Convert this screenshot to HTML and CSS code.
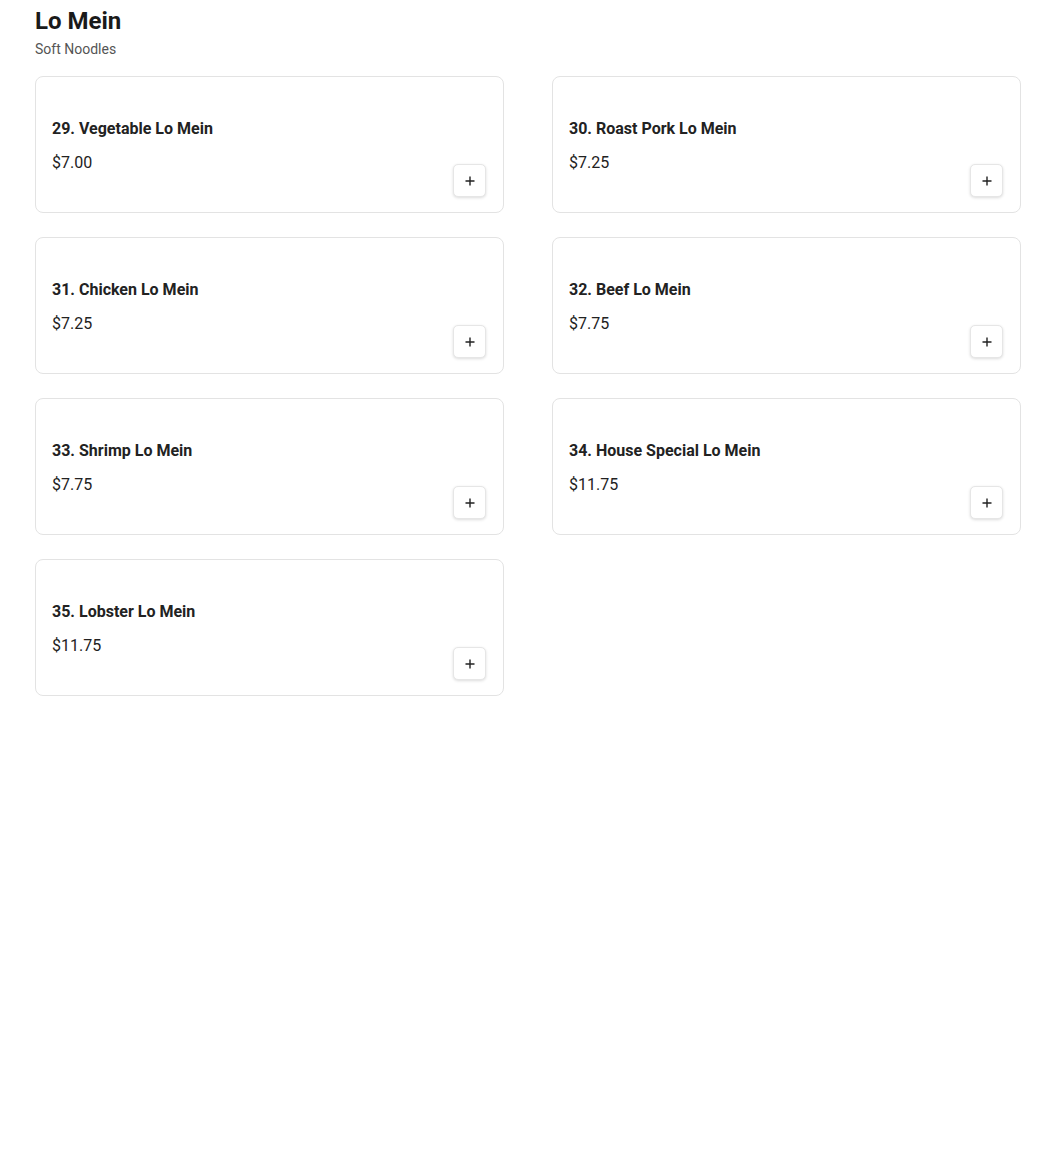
FILE: index.html
```html
<!DOCTYPE html>
<html lang="en">
<head>
<meta charset="utf-8">
<title>Lo Mein</title>
<link rel="stylesheet" href="styles.css">
</head>
<body>
<main class="section">
  <h1 class="section-title">Lo Mein</h1>
  <p class="section-sub">Soft Noodles</p>
  <div class="grid">
    <div class="card"><div class="info"><div class="name">29. Vegetable Lo Mein</div><div class="price">$7.00</div></div><button class="add" aria-label="Add"><svg viewBox="0 0 12 12" width="12" height="12"><path d="M6 1.5v9M1.5 6h9" stroke="#222" stroke-width="1.4" fill="none"/></svg></button></div>
    <div class="card"><div class="info"><div class="name">30. Roast Pork Lo Mein</div><div class="price">$7.25</div></div><button class="add" aria-label="Add"><svg viewBox="0 0 12 12" width="12" height="12"><path d="M6 1.5v9M1.5 6h9" stroke="#222" stroke-width="1.4" fill="none"/></svg></button></div>
    <div class="card"><div class="info"><div class="name">31. Chicken Lo Mein</div><div class="price">$7.25</div></div><button class="add" aria-label="Add"><svg viewBox="0 0 12 12" width="12" height="12"><path d="M6 1.5v9M1.5 6h9" stroke="#222" stroke-width="1.4" fill="none"/></svg></button></div>
    <div class="card"><div class="info"><div class="name">32. Beef Lo Mein</div><div class="price">$7.75</div></div><button class="add" aria-label="Add"><svg viewBox="0 0 12 12" width="12" height="12"><path d="M6 1.5v9M1.5 6h9" stroke="#222" stroke-width="1.4" fill="none"/></svg></button></div>
    <div class="card"><div class="info"><div class="name">33. Shrimp Lo Mein</div><div class="price">$7.75</div></div><button class="add" aria-label="Add"><svg viewBox="0 0 12 12" width="12" height="12"><path d="M6 1.5v9M1.5 6h9" stroke="#222" stroke-width="1.4" fill="none"/></svg></button></div>
    <div class="card"><div class="info"><div class="name">34. House Special Lo Mein</div><div class="price">$11.75</div></div><button class="add" aria-label="Add"><svg viewBox="0 0 12 12" width="12" height="12"><path d="M6 1.5v9M1.5 6h9" stroke="#222" stroke-width="1.4" fill="none"/></svg></button></div>
    <div class="card"><div class="info"><div class="name">35. Lobster Lo Mein</div><div class="price">$11.75</div></div><button class="add" aria-label="Add"><svg viewBox="0 0 12 12" width="12" height="12"><path d="M6 1.5v9M1.5 6h9" stroke="#222" stroke-width="1.4" fill="none"/></svg></button></div>
  </div>
</main>
</body>
</html>
```
FILE: styles.css
```css
* { box-sizing: border-box; }
html, body { margin: 0; padding: 0; background: #fff; }
body { font-family: Roboto, "Liberation Sans", Arial, sans-serif; color: #1f1f1f; }
.section { padding: 5px 29px 0 35px; }
.section-title { margin: 0; font-size: 24px; line-height: 32px; font-weight: 700; color: #1a1a1a; }
.section-sub { margin: 2px 0 0; font-size: 14px; line-height: 20px; color: #555; }
.grid { margin-top: 17px; display: grid; grid-template-columns: 1fr 1fr; column-gap: 48px; row-gap: 24px; }
.card { display: flex; min-height: 137px; padding: 16px; border: 1px solid #e3e3e3; border-radius: 8px; background: #fff; }
.info { flex: 1; display: flex; flex-direction: column; justify-content: center; padding-top: 2px; }
.name { font-size: 16px; line-height: 24px; font-weight: 700; color: #222; }
.price { margin-top: 10px; font-size: 16px; line-height: 24px; color: #222; }
.add { align-self: flex-end; width: 33px; height: 33px; margin: 0 1px -1px 0; padding: 0; display: flex; align-items: center; justify-content: center; background: #fff; border: 1px solid #e6e6e6; border-radius: 5px; box-shadow: 0 1px 3px rgba(0,0,0,0.14); cursor: pointer; }
```
